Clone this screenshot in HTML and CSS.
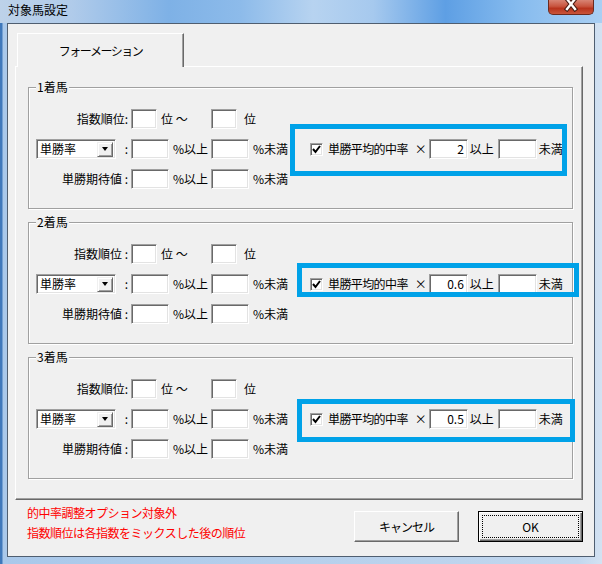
FILE: index.html
```html
<!DOCTYPE html>
<html lang="ja">
<head>
<meta charset="UTF-8">
<title>対象馬設定</title>
<link rel="stylesheet" href="styles.css">
</head>
<body>
<div class="window">
  <div class="titlebar">
    <span class="title">対象馬設定</span>
    <div class="close">
      <svg width="14" height="12" viewBox="0 0 14 12">
        <path d="M3 -1 L11 9 M11 -1 L3 9" stroke="#4a1d14" stroke-width="4.5" stroke-linecap="square"/>
        <path d="M3 -1 L11 9 M11 -1 L3 9" stroke="#fff" stroke-width="2.4" stroke-linecap="square"/>
      </svg>
    </div>
  </div>

  <div class="client">
    <div class="tabs">
      <div class="tab active">フォーメーション</div>
    </div>

    <div class="tab-panel">
      <fieldset class="group">
        <legend>1着馬</legend>
        <div class="row">
          <span class="lbl">指数順位:</span>
          <span class="cell"><span class="edit short"></span><span class="unit">位 ～</span></span>
          <span class="cell"><span class="edit short"></span><span class="unit far">位</span></span>
        </div>
        <div class="row">
          <span class="lbl split"><span class="combo">単勝率<span class="combo-btn"></span></span><span>:</span></span>
          <span class="cell"><span class="edit"></span><span class="unit">%以上</span></span>
          <span class="cell last"><span class="edit"></span><span class="unit">%未満</span></span>
          <span class="ratio">
            <span class="check"><svg width="9" height="9" viewBox="0 0 9 9"><path d="M1 4 L3.5 7 L8 1" fill="none" stroke="#000" stroke-width="2"/></svg></span>
            <span class="ratio-lbl">単勝平均的中率</span>
            <span class="times">×</span>
            <span class="edit num">2</span>
            <span class="unit">以上</span>
            <span class="edit"></span>
            <span class="unit">未満</span>
          </span>
        </div>
        <div class="row">
          <span class="lbl">単勝期待値 :</span>
          <span class="cell"><span class="edit"></span><span class="unit">%以上</span></span>
          <span class="cell last"><span class="edit"></span><span class="unit">%未満</span></span>
        </div>
      </fieldset>

      <fieldset class="group">
        <legend>2着馬</legend>
        <div class="row">
          <span class="lbl">指数順位 :</span>
          <span class="cell"><span class="edit short"></span><span class="unit">位 ～</span></span>
          <span class="cell"><span class="edit short"></span><span class="unit far">位</span></span>
        </div>
        <div class="row">
          <span class="lbl split"><span class="combo">単勝率<span class="combo-btn"></span></span><span>:</span></span>
          <span class="cell"><span class="edit"></span><span class="unit">%以上</span></span>
          <span class="cell last"><span class="edit"></span><span class="unit">%未満</span></span>
          <span class="ratio">
            <span class="check"><svg width="9" height="9" viewBox="0 0 9 9"><path d="M1 4 L3.5 7 L8 1" fill="none" stroke="#000" stroke-width="2"/></svg></span>
            <span class="ratio-lbl">単勝平均的中率</span>
            <span class="times">×</span>
            <span class="edit num">0.6</span>
            <span class="unit">以上</span>
            <span class="edit"></span>
            <span class="unit">未満</span>
          </span>
        </div>
        <div class="row">
          <span class="lbl">単勝期待値 :</span>
          <span class="cell"><span class="edit"></span><span class="unit">%以上</span></span>
          <span class="cell last"><span class="edit"></span><span class="unit">%未満</span></span>
        </div>
      </fieldset>

      <fieldset class="group">
        <legend>3着馬</legend>
        <div class="row">
          <span class="lbl">指数順位:</span>
          <span class="cell"><span class="edit short"></span><span class="unit">位 ～</span></span>
          <span class="cell"><span class="edit short"></span><span class="unit far">位</span></span>
        </div>
        <div class="row">
          <span class="lbl split"><span class="combo">単勝率<span class="combo-btn"></span></span><span>:</span></span>
          <span class="cell"><span class="edit"></span><span class="unit">%以上</span></span>
          <span class="cell last"><span class="edit"></span><span class="unit">%未満</span></span>
          <span class="ratio">
            <span class="check"><svg width="9" height="9" viewBox="0 0 9 9"><path d="M1 4 L3.5 7 L8 1" fill="none" stroke="#000" stroke-width="2"/></svg></span>
            <span class="ratio-lbl">単勝平均的中率</span>
            <span class="times">×</span>
            <span class="edit num">0.5</span>
            <span class="unit">以上</span>
            <span class="edit"></span>
            <span class="unit">未満</span>
          </span>
        </div>
        <div class="row">
          <span class="lbl">単勝期待値 :</span>
          <span class="cell"><span class="edit"></span><span class="unit">%以上</span></span>
          <span class="cell last"><span class="edit"></span><span class="unit">%未満</span></span>
        </div>
      </fieldset>
    </div>

    <div class="footer">
      <div class="notes">
        <p>的中率調整オプション対象外</p>
        <p>指数順位は各指数をミックスした後の順位</p>
      </div>
      <div class="buttons">
        <button class="btn cancel">キャンセル</button>
        <button class="btn default"><span class="focus">OK</span></button>
      </div>
    </div>
  </div>

  <!-- hand drawn highlight marks -->
  <div class="mark mark-1"></div>
  <div class="mark mark-2"></div>
  <div class="mark mark-3"></div>
</div>
</body>
</html>
```

FILE: styles.css
```css
body{
  margin:0;
  font-family:"Noto Sans CJK JP","Noto Sans",sans-serif;
  font-size:12px;
  color:#000;
}

.window{
  position:relative;
  width:602px;
  height:564px;
  box-sizing:border-box;
  background:linear-gradient(to right,#3f78bb 0,#3f78bb 2px,#a9c8ea 3px,#c2d7ee 96%,#d3e2f2 100%);
  overflow:hidden;
}

.titlebar{
  height:23px;
  display:flex;
  justify-content:space-between;
  align-items:flex-start;
  padding-left:8px;
  background:linear-gradient(90deg,#bdd2e9 0%,#b0cbea 12%,#7eb1e6 28%,#8dbbea 40%,#b7d3f0 52%,#a6c9ee 62%,#5e9fe4 74%,#86bbee 86%,#a9cff3 100%);
}
.title{
  line-height:14px;
  padding-top:3px;
}
.close{
  width:46px;
  height:15px;
  margin-right:8px;
  box-sizing:border-box;
  border:1px solid #6b2a1e;
  border-top:0;
  border-radius:0 0 5px 5px;
  background:linear-gradient(#d88474,#c8553f 45%,#b8341d 60%,#c9553a);
  display:flex;
  justify-content:center;
}

.client{
  margin:0 7px;
  height:534px;
  box-sizing:border-box;
  border:1px solid #4f5e70;
  background:#f0f0f0;
  padding:9px 11px 0 7px;
}

.tabs{
  display:flex;
  padding-left:2px;
}
.tab{
  position:relative;
  width:167px;
  height:34px;
  margin-bottom:-1px;
  box-sizing:border-box;
  background:#f0f0f0;
  border-top:1px solid #fff;
  border-left:1px solid #fff;
  border-right:1px solid #696969;
  box-shadow:inset -1px 0 0 #a0a0a0;
  display:flex;
  align-items:center;
  justify-content:center;
  padding-bottom:1px;
  letter-spacing:-1.5px;
}

.tab-panel{
  border-top:1px solid #fff;
  border-left:1px solid #fff;
  border-right:1px solid #696969;
  border-bottom:1px solid #696969;
  box-shadow:inset -1px -1px 0 #a0a0a0;
  padding:14px 9px 20px 12px;
  display:flex;
  flex-direction:column;
  gap:7px;
}

.group{
  margin:0;
  padding:16px 0 19px 7px;
  border:1px solid #a0a0a0;
  box-shadow:1px 1px 0 #fff,inset 1px 1px 0 #fff;
  display:flex;
  flex-direction:column;
  gap:10px;
}
.group legend{
  padding:0 1px;
  line-height:12px;
  background:#f0f0f0;
}

.row{
  display:flex;
  align-items:center;
  height:20px;
  line-height:20px;
  white-space:nowrap;
}
.lbl{
  width:95px;
  flex:none;
  box-sizing:border-box;
  padding-right:3px;
  text-align:right;
}
.lbl.split{
  display:flex;
  justify-content:space-between;
  align-items:center;
}
.cell{
  width:80px;
  flex:none;
  display:flex;
  align-items:center;
}
.cell.last{
  width:99px;
}

.edit{
  display:inline-block;
  width:38px;
  height:20px;
  flex:none;
  box-sizing:border-box;
  background:#fff;
  border:1px solid;
  border-color:#a0a0a0 #fff #fff #a0a0a0;
  box-shadow:inset 1px 1px 0 #696969,inset -1px -1px 0 #e3e3e3;
  text-align:right;
  padding-right:3px;
  line-height:18px;
}
.edit.short{
  width:26px;
}
.unit{
  margin-left:4px;
}
.unit.far{
  margin-left:7px;
}

.combo{
  width:80px;
  height:20px;
  box-sizing:border-box;
  background:#fff;
  border:1px solid;
  border-color:#a0a0a0 #fff #fff #a0a0a0;
  box-shadow:inset 1px 1px 0 #696969,inset -1px -1px 0 #e3e3e3;
  padding:0 2px 0 3px;
  display:flex;
  justify-content:space-between;
  align-items:center;
  text-align:left;
  line-height:16px;
}
.combo-btn{
  width:16px;
  height:15px;
  box-sizing:border-box;
  background:#f0f0f0;
  border:1px solid;
  border-color:#f0f0f0 #696969 #696969 #f0f0f0;
  box-shadow:inset 1px 1px 0 #fff,inset -1px -1px 0 #a0a0a0;
  display:flex;
  justify-content:center;
  align-items:center;
}
.combo-btn::after{
  content:"";
  border-left:3.5px solid transparent;
  border-right:3.5px solid transparent;
  border-top:4px solid #000;
}

.ratio{
  display:flex;
  align-items:center;
}
.check{
  width:13px;
  height:13px;
  box-sizing:border-box;
  background:#fff;
  border:1px solid;
  border-color:#a0a0a0 #fff #fff #a0a0a0;
  box-shadow:inset 1px 1px 0 #696969,inset -1px -1px 0 #e3e3e3;
  display:flex;
  justify-content:center;
  align-items:center;
  margin-right:5px;
}
.ratio-lbl{
  letter-spacing:-0.6px;
}
.times{
  margin-left:7px;
  margin-right:2px;
}
.ratio .edit{
  width:39px;
}
.ratio .unit{
  margin-left:2px;
  margin-right:4px;
}

.footer{
  display:flex;
  justify-content:space-between;
  align-items:flex-start;
  margin-top:3px;
  padding-left:12px;
}
.notes p{
  margin:0;
  line-height:20px;
  color:#f00;
  letter-spacing:-0.5px;
}
.buttons{
  display:flex;
  gap:19px;
  margin-top:8px;
}
.btn{
  width:105px;
  height:31px;
  box-sizing:border-box;
  font:inherit;
  color:#000;
  background:#f0f0f0;
  border:1px solid;
  border-color:#fff #696969 #696969 #fff;
  box-shadow:inset -1px -1px 0 #a0a0a0;
  padding:0;
}
.cancel{
  letter-spacing:-1px;
}
.default{
  border:1px solid #000;
  box-shadow:inset 1px 1px 0 #fff,inset -1px -1px 0 #696969,inset -2px -2px 0 #a0a0a0;
  padding:3px;
  display:flex;
}
.focus{
  flex:1;
  border:1px dotted #000;
  display:flex;
  justify-content:center;
  align-items:center;
}

.mark{
  position:absolute;
  box-sizing:border-box;
  border:5px solid #00a2e8;
}
.mark-1{
  left:290px;
  top:124px;
  width:277px;
  height:52px;
}
.mark-2{
  left:297px;
  top:263px;
  width:282px;
  height:34px;
}
.mark-3{
  left:297px;
  top:399px;
  width:278px;
  height:43px;
}
```
